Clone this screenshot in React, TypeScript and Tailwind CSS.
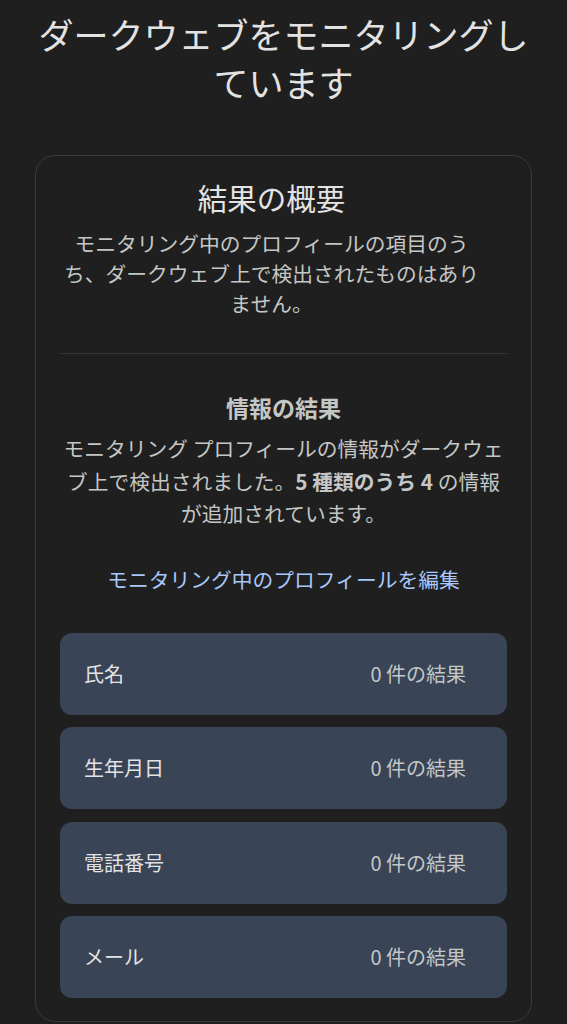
export default function App() {
  const rows = ["氏名", "生年月日", "電話番号", "メール"];

  return (
    <main
      className="min-h-screen bg-[#1f1f1f] text-[#e3e3e3]"
      style={{ fontFamily: '"Noto Sans CJK JP", "Noto Sans", sans-serif' }}
    >
      {/* Page title */}
      <h1 className="px-[25px] pt-[10px] text-center text-[35px] font-normal leading-[48px] text-[#e3e3e3]">
        ダークウェブをモニタリングしています
      </h1>

      {/* Summary card */}
      <section className="mx-[35px] mt-[49px] rounded-[20px] border border-[#3a3a3a] px-6 pb-[23px] pt-[23px]">
        <div className="pr-6">
          <h2 className="text-center text-[29.5px] leading-[36px] text-[#e3e3e3]">結果の概要</h2>
          <p className="mt-[13px] text-center text-[20.75px] leading-[30px] text-[#c4c7c5]">
            モニタリング中のプロフィールの項目のうち、ダークウェブ上で検出されたものはありません。
          </p>
        </div>

        <div className="mt-[35px] h-px bg-[#353535]" />

        <h3 className="mt-[38px] text-center text-[23px] font-bold leading-[30px] text-[#c4c7c5]">
          情報の結果
        </h3>
        <p className="mt-[10px] text-center text-[20.75px] leading-[32.5px] text-[#c4c7c5]">
          モニタリング プロフィールの情報がダークウェブ上で検出されました。
          <span className="font-bold">5 種類のうち 4</span> の情報が追加されています。
        </p>

        <div className="mt-[34px] text-center text-[20.75px] leading-[30px] text-[#a8c7fa]">
          モニタリング中のプロフィールを編集
        </div>

        <div className="mt-[39px] flex flex-col gap-[12.5px]">
          {rows.map((label) => (
            <div
              key={label}
              className="flex h-[82px] items-center justify-between rounded-[12px] bg-[#394457] pl-6 pr-[41px]"
            >
              <span className="text-[20px] text-[#e3e3e3]">{label}</span>
              <span className="text-[20px] text-[#c4c7c5]">0 件の結果</span>
            </div>
          ))}
        </div>
      </section>
    </main>
  );
}
